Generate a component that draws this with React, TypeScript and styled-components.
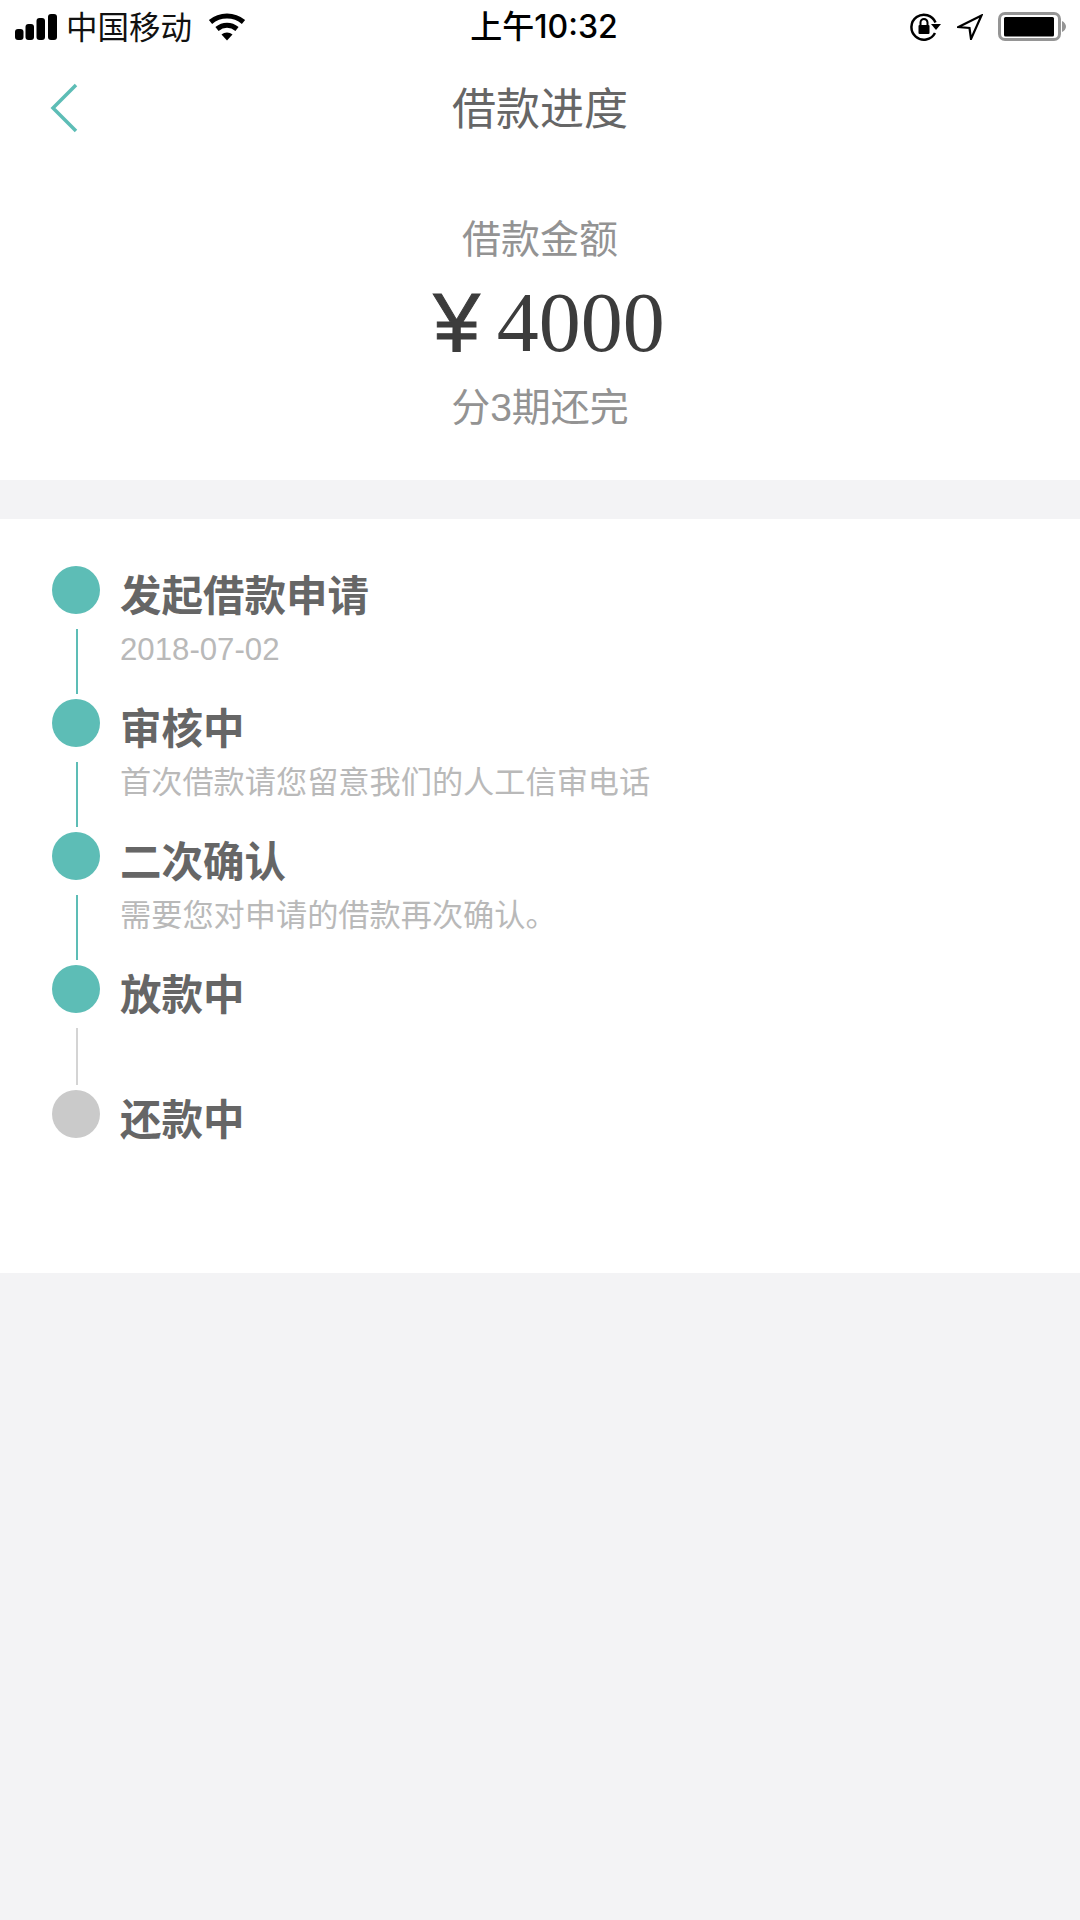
import * as React from "react";
import styled, { createGlobalStyle } from "styled-components";

const GlobalStyle = createGlobalStyle`
  html, body {
    margin: 0;
    padding: 0;
    background: #f3f3f5;
  }
  body {
    font-family: "Liberation Sans", "Noto Sans CJK SC", sans-serif;
  }
`;

type StepData = {
  title: string;
  desc?: string;
  done: boolean;
  line?: { height: number; done: boolean };
};

const steps: StepData[] = [
  { title: "发起借款申请", desc: "2018-07-02", done: true, line: { height: 65, done: true } },
  { title: "审核中", desc: "首次借款请您留意我们的人工信审电话", done: true, line: { height: 65, done: true } },
  { title: "二次确认", desc: "需要您对申请的借款再次确认。", done: true, line: { height: 65, done: true } },
  { title: "放款中", done: true, line: { height: 57, done: false } },
  { title: "还款中", done: false },
];

const StatusBarIcons = {
  Signal: () => (
    <svg width="43" height="27" viewBox="0 0 43 27">
      <rect x="0" y="15" width="8.500" height="11" rx="3" fill="#000" />
      <rect x="10.500" y="10" width="8.500" height="16" rx="3" fill="#000" />
      <rect x="21.500" y="4" width="8.500" height="22" rx="3" fill="#000" />
      <rect x="33" y="0" width="9" height="26" rx="3" fill="#000" />
    </svg>
  ),
  Wifi: () => (
    <svg width="38" height="28" viewBox="0 0 38 28">
      <path d="M2.500 9C12 1 26 1 35.500 9" fill="none" stroke="#000" strokeWidth="5" />
      <path d="M9 16C15 11 23 11 29 16" fill="none" stroke="#000" strokeWidth="5" />
      <path d="M13.500 21.500C16.500 18.800 21.500 18.800 24.500 21.500L19 27.500Z" fill="#000" />
    </svg>
  ),
  RotationLock: () => (
    <svg width="32" height="28" viewBox="0 0 32 28">
      <path d="M25.500 9.500A12.500 12.500 0 1 0 25 20" fill="none" stroke="#000" strokeWidth="2.500" />
      <path d="M21 11H31L26 17Z" fill="#000" />
      <rect x="8.500" y="12" width="11" height="9" rx="1" fill="#000" />
      <path d="M10.500 12V9.500A3.500 3.500 0 0 1 17.500 9.500V12" fill="none" stroke="#000" strokeWidth="2" />
    </svg>
  ),
  Location: () => (
    <svg width="26" height="26" viewBox="0 0 26 26">
      <path d="M24.500 1.500L1.500 13L12.500 14L14 25Z" fill="none" stroke="#000" strokeWidth="2.200" strokeLinejoin="miter" />
    </svg>
  ),
  Battery: () => (
    <svg width="70" height="30" viewBox="0 0 70 30">
      <rect x="1.500" y="1.500" width="60" height="26" rx="5.500" fill="none" stroke="#959595" strokeWidth="3" />
      <rect x="6" y="5" width="50" height="19.500" rx="1.500" fill="#000" />
      <path d="M64 9C66.500 10 68 12.500 68 14.500C68 16.500 66.500 19 64 20Z" fill="#959595" />
    </svg>
  ),
};

const App: React.FC = () => {
  return (
    <>
      <GlobalStyle />
      <Page>
        <TopPanel>
          <StatusBar>
            <StatusLeft>
              <StatusBarIcons.Signal />
              <Carrier>中国移动</Carrier>
              <StatusBarIcons.Wifi />
            </StatusLeft>
            <Clock>上午10:32</Clock>
            <StatusRight>
              <StatusBarIcons.RotationLock />
              <StatusBarIcons.Location />
              <StatusBarIcons.Battery />
            </StatusRight>
          </StatusBar>

          <NavBar>
            <BackButton>
              <svg width="28" height="50" viewBox="0 0 28 50">
                <path d="M26 2L3 25L26 48" fill="none" stroke="#5dbdb6" strokeWidth="3.500" />
              </svg>
            </BackButton>
            <NavTitle>借款进度</NavTitle>
          </NavBar>

          <Summary>
            <SummaryLabel>借款金额</SummaryLabel>
            <Amount>
              <Currency>¥</Currency>
              <Digits>4000</Digits>
            </Amount>
            <SummaryLabel>分3期还完</SummaryLabel>
          </Summary>
        </TopPanel>

        <StepsPanel>
          {steps.map((step) => (
            <Step key={step.title}>
              <Rail>
                <Dot $done={step.done} />
                {step.line && <Connector $done={step.line.done} $height={step.line.height} />}
              </Rail>
              <StepBody>
                <StepTitle>{step.title}</StepTitle>
                {step.desc && <StepDesc>{step.desc}</StepDesc>}
              </StepBody>
            </Step>
          ))}
        </StepsPanel>
      </Page>
    </>
  );
};

export default App;

const Page = styled.div`
  width: 1080px;
  height: 1920px;
  overflow: hidden;
  background: #f3f3f5;
`;

const TopPanel = styled.header`
  height: 480px;
  background: #fff;
`;

const StatusBar = styled.div`
  display: grid;
  grid-template-columns: 1fr auto 1fr;
  align-items: center;
  height: 54px;
  padding: 0 12px 0 15px;
`;

const StatusLeft = styled.div`
  display: flex;
  align-items: center;
`;

const Carrier = styled.span`
  margin: 0 16px 0 8px;
  padding-bottom: 4px;
  font-size: 31.500px;
  color: #111;
`;

const Clock = styled.span`
  margin-left: 5px;
  padding-bottom: 6px;
  font-family: Inter, "Noto Sans CJK SC", sans-serif;
  font-size: 32px;
  font-weight: 500;
  color: #000;
`;

const StatusRight = styled.div`
  display: flex;
  align-items: center;
  justify-content: flex-end;
  gap: 15px;
`;

const NavBar = styled.nav`
  position: relative;
  display: flex;
  justify-content: center;
  align-items: center;
  height: 112px;
`;

const BackButton = styled.div`
  position: absolute;
  left: 50px;
  top: 29px;
  line-height: 0;
`;

const NavTitle = styled.h1`
  margin: 0;
  font-size: 44px;
  font-weight: 400;
  line-height: 1.2;
  color: #666;
`;

const Summary = styled.section`
  display: flex;
  flex-direction: column;
  align-items: center;
  padding-top: 48px;
`;

const SummaryLabel = styled.div`
  font-size: 39px;
  line-height: 52px;
  color: #939393;
`;

const Amount = styled.div`
  display: flex;
  align-items: baseline;
  justify-content: center;
  gap: 17px;
  height: 116px;
  margin-left: 18px;
  color: #3c3c3c;
`;

const Currency = styled.span`
  font-family: "Liberation Sans", sans-serif;
  font-size: 84px;
  line-height: 112px;
  -webkit-text-stroke: 1px #3c3c3c;
`;

const Digits = styled.span`
  font-family: "Liberation Serif", serif;
  font-size: 84px;
  line-height: 112px;
`;

const StepsPanel = styled.section`
  height: 754px;
  margin-top: 39px;
  padding: 47px 0 0 52px;
  box-sizing: border-box;
  background: #fff;
`;

const Step = styled.div`
  display: flex;
  gap: 20px;
`;

const Rail = styled.div`
  display: flex;
  flex-direction: column;
  align-items: center;
  width: 48px;
  flex-shrink: 0;
`;

const Dot = styled.div<{ $done: boolean }>`
  width: 48px;
  height: 48px;
  border-radius: 50%;
  background: ${(p) => (p.$done ? "#5dbdb6" : "#cacaca")};
`;

const Connector = styled.div<{ $done: boolean; $height: number }>`
  width: 2px;
  height: ${(p) => p.$height}px;
  margin: 15px 0 5px 2px;
  background: ${(p) => (p.$done ? "#5dbdb6" : "#d4d4d4")};
`;

const StepBody = styled.div`
  padding-top: 3px;
`;

const StepTitle = styled.div`
  font-size: 41.500px;
  font-weight: 700;
  line-height: 56px;
  color: #666;
`;

const StepDesc = styled.div`
  margin-top: 5px;
  font-size: 31.200px;
  line-height: 40px;
  color: #b9b9b9;
`;
